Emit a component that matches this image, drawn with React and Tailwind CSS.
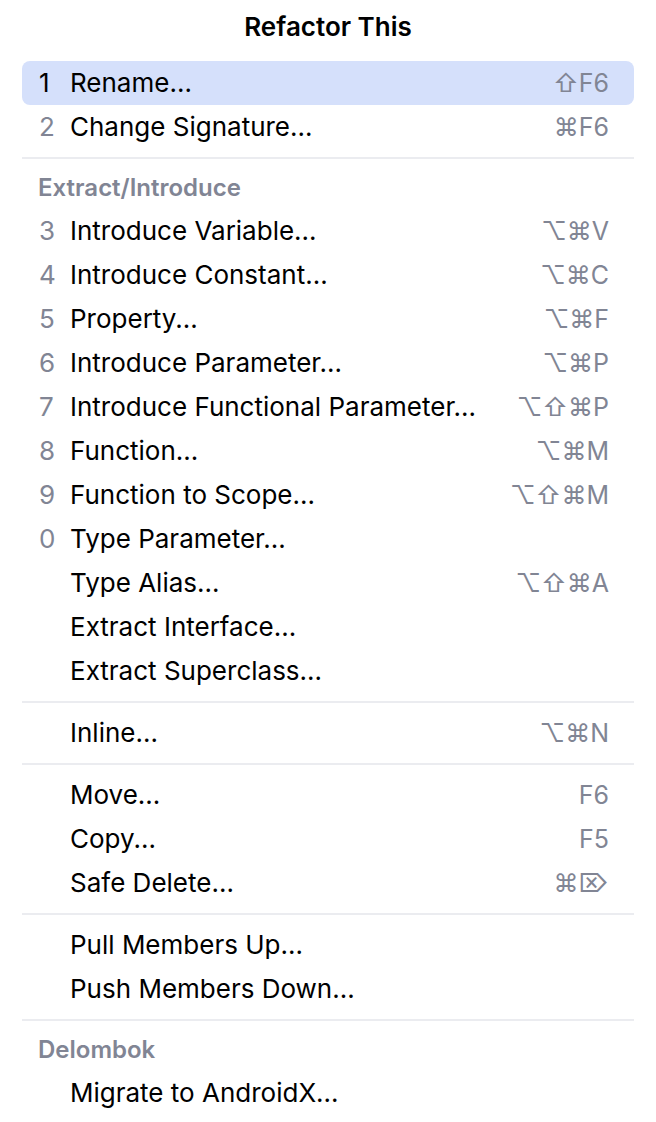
import React from "react";

const font = { fontFamily: "Inter, 'Noto Sans', 'DejaVu Sans', sans-serif" };

const items = [
  { type: "item", num: "1", label: "Rename...", key: "⇧F6", active: true },
  { type: "item", num: "2", label: "Change Signature...", key: "⌘F6" },
  { type: "sep" },
  { type: "header", label: "Extract/Introduce" },
  { type: "item", num: "3", label: "Introduce Variable...", key: "⌥⌘V" },
  { type: "item", num: "4", label: "Introduce Constant...", key: "⌥⌘C" },
  { type: "item", num: "5", label: "Property...", key: "⌥⌘F" },
  { type: "item", num: "6", label: "Introduce Parameter...", key: "⌥⌘P" },
  { type: "item", num: "7", label: "Introduce Functional Parameter...", key: "⌥⇧⌘P" },
  { type: "item", num: "8", label: "Function...", key: "⌥⌘M" },
  { type: "item", num: "9", label: "Function to Scope...", key: "⌥⇧⌘M" },
  { type: "item", num: "0", label: "Type Parameter..." },
  { type: "item", label: "Type Alias...", key: "⌥⇧⌘A" },
  { type: "item", label: "Extract Interface..." },
  { type: "item", label: "Extract Superclass..." },
  { type: "sep" },
  { type: "item", label: "Inline...", key: "⌥⌘N" },
  { type: "sep" },
  { type: "item", label: "Move...", key: "F6" },
  { type: "item", label: "Copy...", key: "F5" },
  { type: "item", label: "Safe Delete...", key: "⌘⌦" },
  { type: "sep" },
  { type: "item", label: "Pull Members Up..." },
  { type: "item", label: "Push Members Down..." },
  { type: "sep" },
  { type: "header", label: "Delombok" },
  { type: "item", label: "Migrate to AndroidX..." },
];

function Row({ item }) {
  if (item.type === "sep") {
    return (
      <div className="h-[18px] flex items-center">
        <div className="h-[2px] w-full bg-[#ebecf0]" />
      </div>
    );
  }
  if (item.type === "header") {
    return (
      <div className="h-[42px] flex items-center pl-[16px] text-[24px] font-semibold text-[#818594]">
        {item.label}
      </div>
    );
  }
  return (
    <div
      className={`h-[44px] flex items-center pl-[17px] pr-[25px] rounded-[8px] ${
        item.active ? "bg-[#d5e0fb]" : ""
      }`}
    >
      <span className={`w-[31px] ${item.active ? "text-black" : "text-[#818594]"}`}>{item.num}</span>
      <span className="flex-1 text-black whitespace-nowrap">{item.label}</span>
      {item.key && <span className="text-[#818594] text-[25px]">{item.key}</span>}
    </div>
  );
}

export default function App() {
  return (
    <div className="w-[656px] h-[1122px] bg-white overflow-hidden text-[26px] leading-none" style={font}>
      <div className="h-[54px] flex items-center justify-center font-semibold text-[26px] text-black">
        Refactor This
      </div>
      <div className="mt-[7px] mx-[22px] flex flex-col">
        {items.map((it, i) => (
          <Row key={i} item={it} />
        ))}
      </div>
    </div>
  );
}
